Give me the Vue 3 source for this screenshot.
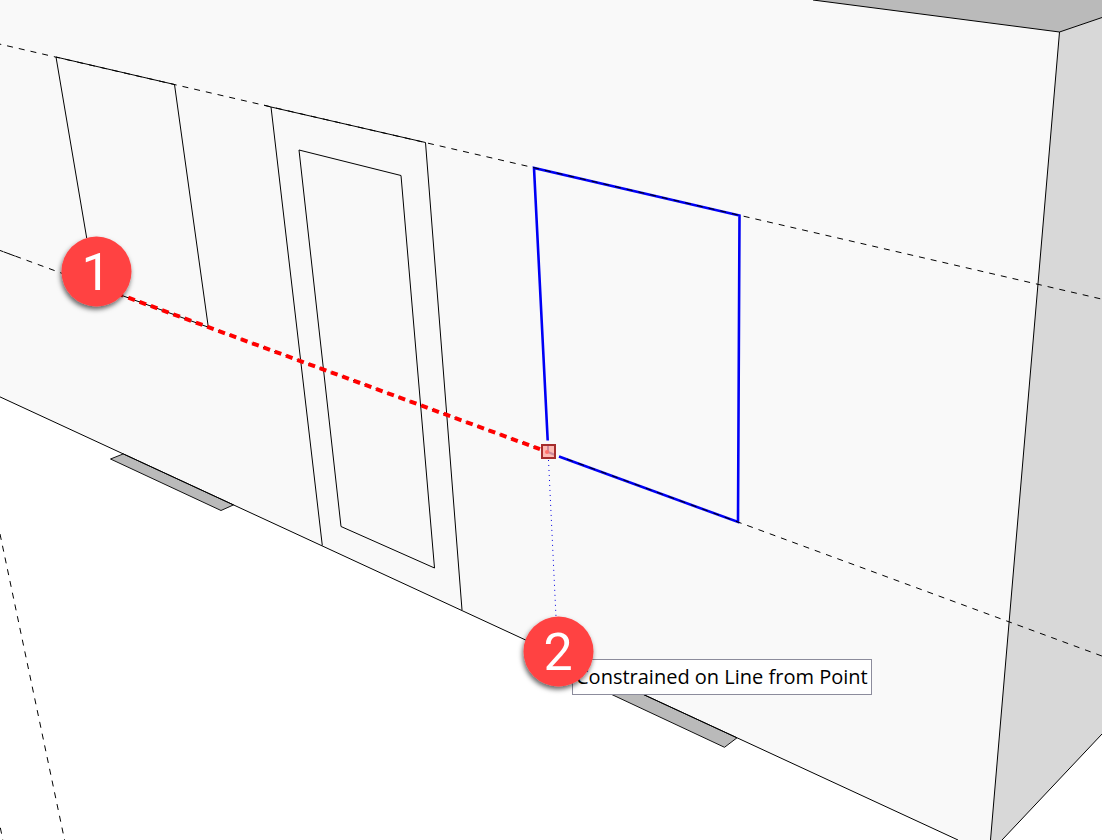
<script setup>
const guides = [
  { x1: -4.6, y1: 43.1, x2: 1110, y2: 301 },
  { x1: -7.3, y1: 247.8, x2: 541, y2: 449.6 },
  { x1: 567, y1: 459.1, x2: 1110, y2: 659 },
  { x1: -2, y1: 249.7, x2: 17, y2: 256.8 },
  { x1: 0, y1: 534, x2: 65, y2: 842 },
  { x1: -2, y1: 816, x2: 3, y2: 841 },
]

const edges = [
  '0,396.9 958,840',
  '813,0 1059.5,32 990.5,840',
  '1059.5,32 1102,17.5',
  '1102,734 1002,840',
  '86.7,238 56,57 174.5,84.5 208.3,327.2 122,295.5',
  '264,105.2 271,107 425.5,142.5 462,610',
  '271,107 322.3,545.5',
  '299,150 401,175.5 434.5,568 341,526.5 299,150',
]

const steps = [
  { label: '1', x: 96.5, y: 271.5, textX: 96, textY: 290 },
  { label: '2', x: 558.5, y: 651.5, textX: 558, textY: 670 },
]
</script>

<template>
  <main class="viewport">
    <svg class="scene" viewBox="0 0 1102 840" preserveAspectRatio="xMinYMin slice">
      <defs>
        <filter id="badge-shadow" x="-30%" y="-30%" width="160%" height="160%">
          <feDropShadow dx="-1" dy="3" stdDeviation="2.5" flood-color="#000" flood-opacity="0.6" />
        </filter>
      </defs>

      <polygon class="wall" points="0,0 813,0 1059.5,32 990.5,840 958,840 0,396.9" />
      <polygon class="roof" points="813,0 1102,0 1102,17.5 1059.5,32" />
      <polygon class="side" points="1059.5,32 1102,17.5 1102,734 1002,840 990.5,840" />
      <polygon class="pad" points="123.3,453.9 110.5,459 221,510.5 233.5,504.9" />
      <polygon class="pad" points="630,688.3 600,689 724.5,747.3 737,737.8" />

      <polyline v-for="points in edges" :key="points" class="edge" :points="points" />

      <polyline class="window" points="547.7,440.5 534,168 739.5,215.5 738,522 559,456.5" />
      <line v-for="(g, i) in guides" :key="i" class="guide" v-bind="g" />

      <line class="inference" x1="128.3" y1="297.7" x2="540" y2="449.2" />
      <line class="inference-start" x1="119" y1="294.6" x2="123" y2="296" />
      <line class="drop" x1="548.5" y1="460" x2="556" y2="617" />

      <line class="node-v" x1="548" y1="445" x2="548" y2="452" />
      <line class="node-v" x1="548" y1="452" x2="555" y2="455" />
      <circle class="node-dot" cx="547" cy="452" r="2" />
      <rect class="node" x="542" y="445" width="13" height="13" />

      <rect class="tip" x="572.5" y="659.5" width="299" height="35" />
      <text class="tip-text" x="576" y="684">Constrained on Line from Point</text>

      <g v-for="s in steps" :key="s.label">
        <circle class="badge" :cx="s.x" :cy="s.y" r="35" filter="url(#badge-shadow)" />
        <text class="badge-text" :x="s.textX" :y="s.textY">{{ s.label }}</text>
      </g>
    </svg>
  </main>
</template>

<style>
body {
  margin: 0;
}
</style>

<style scoped>
.viewport {
  height: 100vh;
  overflow: hidden;
  background: #fff;
}
.scene {
  display: block;
  width: 100%;
  height: 100%;
}
.wall {
  fill: #f9f9f9;
}
.roof {
  fill: #bababa;
}
.side {
  fill: #d8d8d8;
}
.pad {
  fill: #bababa;
  stroke: #111;
  stroke-width: 1;
}
.edge {
  fill: none;
  stroke: #000;
  stroke-width: 1;
}
.guide {
  stroke: #000;
  stroke-width: 1;
  stroke-dasharray: 6 6;
}
.window {
  fill: none;
  stroke: #0000f5;
  stroke-width: 2.6;
}
.inference {
  stroke: #f00;
  stroke-width: 4;
  stroke-dasharray: 7 5;
}
.inference-start {
  stroke: #c00;
  stroke-width: 3;
}
.drop {
  stroke: #0000e0;
  stroke-width: 1;
  stroke-dasharray: 1 4;
}
.node {
  fill: #ffa095;
  fill-opacity: 0.7;
  stroke: #a52c2c;
  stroke-width: 2;
}
.node-v {
  stroke: #55a;
  stroke-width: 2;
}
.node-dot {
  fill: #f00;
}
.tip {
  fill: #fff;
  stroke: #8c8c9c;
  stroke-width: 1;
}
.tip-text {
  font: 20px "Open Sans", sans-serif;
  fill: #000;
}
.badge {
  fill: #ff4343;
}
.badge-text {
  font: 52px Roboto, "Liberation Sans", sans-serif;
  fill: #fff;
  text-anchor: middle;
}
</style>
